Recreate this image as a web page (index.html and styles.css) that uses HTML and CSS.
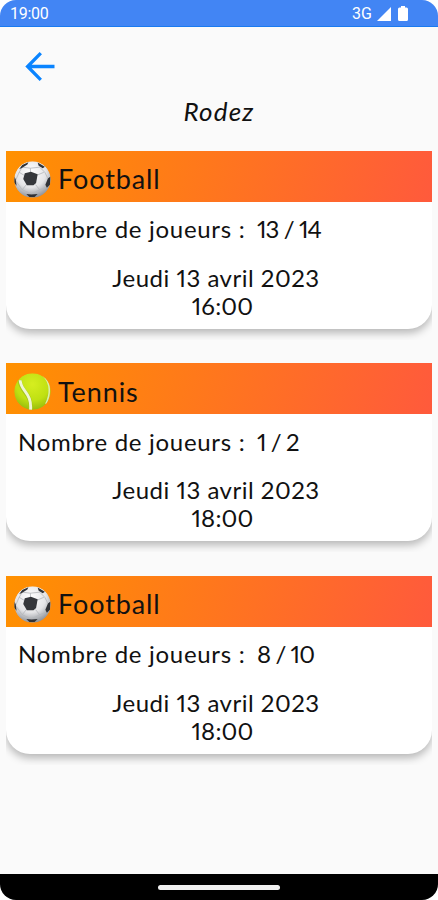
FILE: index.html
```html
<!DOCTYPE html>
<html lang="fr">
<head>
  <meta charset="UTF-8">
  <title>Rodez</title>
  <link rel="stylesheet" href="styles.css">
</head>
<body>
  <svg width="0" height="0" class="defs">
    <defs>
      <radialGradient id="leather" cx="45%" cy="30%" r="70%">
        <stop offset="0" stop-color="#fff"/>
        <stop offset="0.6" stop-color="#e4e4e6"/>
        <stop offset="1" stop-color="#8f9298"/>
      </radialGradient>
      <radialGradient id="felt" cx="50%" cy="30%" r="75%">
        <stop offset="0" stop-color="#d6ee20"/>
        <stop offset="0.6" stop-color="#bfe012"/>
        <stop offset="1" stop-color="#8fb60c"/>
      </radialGradient>
      <clipPath id="round"><circle cx="18" cy="18" r="17.8"/></clipPath>
    </defs>
    <symbol id="football" viewBox="0 0 36 36">
      <g clip-path="url(#round)">
        <circle cx="18" cy="18" r="17.8" fill="url(#leather)"/>
        <path d="M16 11V7M22 14L29 11M21 23L25 28M12 23L8 28M10 14L5 11M5 11L8 6L16 7L25 6L30 11L33 17M5 11L1.500 19L8 28L17 32L25 28L32 25" fill="none" stroke="#b5b7bb" stroke-width="0.8"/>
        <path d="M16.500 10.500L23 13L21.500 21.500L19 23.500H12.500L9 17.500L10.500 12Z" fill="#35373b"/>
        <path d="M8 4L14 1.200L13 3.500L8 6.500L5 8ZM23 1.500L30 5.500L28 7L24 4.500ZM35.500 15L33 17L30.500 23L32 26L35 23ZM.500 15L1.700 18L2.500 24L0 21ZM12 32L17 32.500L23 32L20 35H15Z" fill="#303236"/>
      </g>
    </symbol>
    <symbol id="tennis" viewBox="0 0 36 36">
      <g clip-path="url(#round)">
        <circle cx="18" cy="18" r="17.8" fill="url(#felt)"/>
        <path d="M5.500 7C6 19 18 19 16 37" fill="none" stroke="#a6c71c" stroke-width="4"/>
        <path d="M6 7C6.500 18 18 19 16 37" fill="none" stroke="#f0f5d5" stroke-width="2.800"/>
        <path d="M29 3C36 10 35.500 21 31 30" fill="none" stroke="#dcecac" stroke-width="1.500"/>
      </g>
    </symbol>
  </svg>

  <div class="phone">
    <header class="status-bar">
      <span class="clock">19:00</span>
      <span class="network">3G</span>
      <svg class="signal" width="14" height="14" viewBox="0 0 14 14"><path d="M14 0V14H0Z" fill="#fff"/></svg>
      <svg class="battery" width="10" height="15" viewBox="0 0 10 15"><path d="M3 0H7V1.500H8.500Q10 1.500 10 3V13.500Q10 15 8.500 15H1.500Q0 15 0 13.500V3Q0 1.500 1.500 1.500H3Z" fill="#fff"/></svg>
    </header>

    <main>
      <a class="back" href="#" aria-label="Retour">
        <svg width="30" height="30" viewBox="0 0 30 30"><path d="M15.800 1.200L2.600 14.500L15.800 27.800M2.800 14.500H29.500" fill="none" stroke="#0a84ff" stroke-width="3.300"/></svg>
      </a>
      <h1>Rodez</h1>

      <div class="event">
        <div class="card">
          <div class="card-header">
            <svg class="ball"><use href="#football"/></svg>
            <h2>Football</h2>
          </div>
          <p class="players"><span class="label">Nombre de joueurs :</span><span class="count">13 / 14</span></p>
          <p class="date">Jeudi 13 avril 2023</p>
          <p class="hour">16:00</p>
        </div>
      </div>

      <div class="event">
        <div class="card">
          <div class="card-header">
            <svg class="ball"><use href="#tennis"/></svg>
            <h2>Tennis</h2>
          </div>
          <p class="players"><span class="label">Nombre de joueurs :</span><span class="count">1 / 2</span></p>
          <p class="date">Jeudi 13 avril 2023</p>
          <p class="hour">18:00</p>
        </div>
      </div>

      <div class="event">
        <div class="card">
          <div class="card-header">
            <svg class="ball"><use href="#football"/></svg>
            <h2>Football</h2>
          </div>
          <p class="players"><span class="label">Nombre de joueurs :</span><span class="count">8 / 10</span></p>
          <p class="date">Jeudi 13 avril 2023</p>
          <p class="hour">18:00</p>
        </div>
      </div>
    </main>

    <footer class="nav-bar"><span class="handle"></span></footer>
  </div>
</body>
</html>
```

FILE: styles.css
```css
* {
  box-sizing: border-box;
}
body {
  margin: 0;
  background: #fff;
  font-family: Lato, sans-serif;
  color: #111;
}
.defs {
  display: block;
}
.phone {
  height: 900px;
  display: flex;
  flex-direction: column;
  background: #fafafa;
  border-radius: 16px;
  overflow: hidden;
}
.status-bar {
  height: 27px;
  flex: none;
  display: flex;
  align-items: center;
  padding: 0 30px 0 10px;
  background: #4285f4;
  border-bottom: 1px solid #1a7af0;
  color: #fff;
  font: 400 16px/28px Roboto, sans-serif;
}
.clock {
  margin-right: auto;
  padding-top: 1px;
  letter-spacing: -0.3px;
}
.network {
  padding-top: 1px;
}
.signal {
  margin: 1px 7px 0 5px;
}
main {
  flex: 1;
  padding: 25px 6px 0;
}
.back {
  display: block;
  width: 30px;
  height: 30px;
  margin-left: 19px;
}
h1, h2, p {
  margin: 0;
  font-weight: 400;
}
h1 {
  margin-top: 15px;
  text-align: center;
  font-size: 26px;
  font-style: italic;
  line-height: 28px;
  letter-spacing: 1.2px;
}
/* the card's shadow is cut off by its list cell */
.event {
  height: 189px;
  margin-bottom: 23.5px;
  overflow: hidden;
}
h1 + .event {
  margin-top: 25.5px;
}
.card {
  height: 178px;
  background: #fff;
  border-radius: 0 0 24px 24px;
  box-shadow: 0 4px 9px rgba(0, 0, 0, 0.28);
  font-variant-numeric: proportional-nums;
}
.card-header {
  height: 51px;
  display: flex;
  align-items: center;
  padding: 6px 8px 0;
  background: linear-gradient(105deg, #ff9100, #ff5a3c);
}
.ball {
  width: 37px;
  height: 37px;
}
h2 {
  margin-left: 7px;
  font-size: 27px;
  line-height: 32px;
  letter-spacing: 0.9px;
}
.players {
  display: flex;
  padding: 13.5px 12px 0;
  font-size: 24px;
  line-height: 28px;
}
.label {
  width: 239px;
  letter-spacing: 0.7px;
  white-space: nowrap;
}
.count {
  letter-spacing: -0.9px;
}
.date {
  margin-top: 20.5px;
  text-align: center;
  font-size: 24px;
  line-height: 28px;
  letter-spacing: 0.5px;
  padding-right: 6px;
}
.hour {
  text-align: center;
  font-size: 24px;
  line-height: 28px;
  letter-spacing: 0.2px;
  padding-left: 7px;
}
.nav-bar {
  height: 26px;
  flex: none;
  display: flex;
  justify-content: center;
  align-items: center;
  background: #000;
}
.handle {
  width: 122px;
  height: 5px;
  border-radius: 3px;
  background: #f0f0f0;
}
```
